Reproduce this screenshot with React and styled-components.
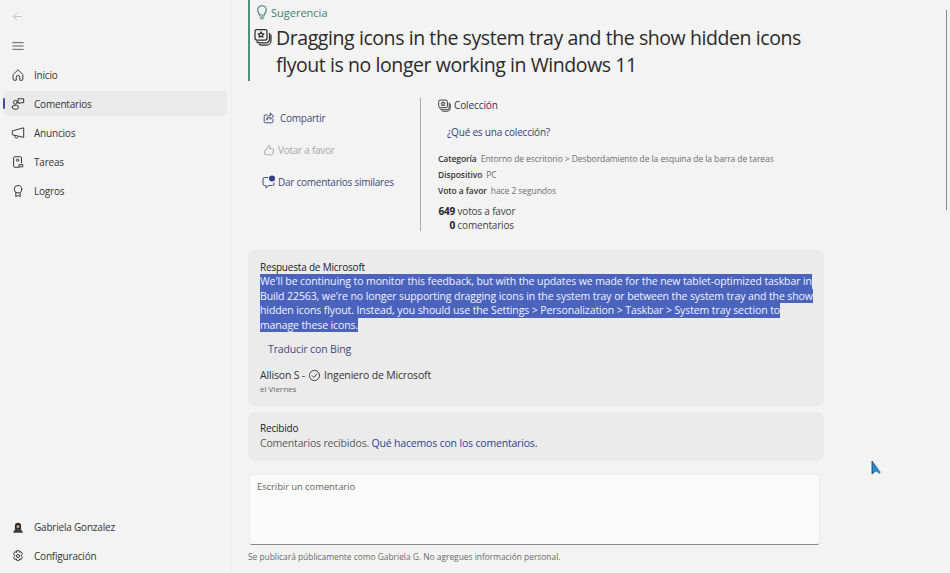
import React from "react";
import styled, { createGlobalStyle } from "styled-components";

const Global = createGlobalStyle`
  html, body { margin: 0; padding: 0; height: 100%; overflow: hidden; background: #f3f3f3; }
  body { font-family: "Open Sans", "Noto Sans", sans-serif; color: #2b2b2b; }
  * { box-sizing: border-box; }
`;

const Page = styled.div`
  position: relative;
  display: flex;
  width: 950px;
  height: 573px;
  overflow: hidden;
`;

const Sidebar = styled.aside`
  width: 232px;
  height: 100%;
  flex: none;
  display: flex;
  flex-direction: column;
  justify-content: space-between;
  padding: 0 4px 3px 4px;
  border-right: 1px solid #eeeeee;
`;

const NavTop = styled.nav`
  display: flex;
  flex-direction: column;
  padding-top: 2px;
`;

const NavBottom = styled.nav`
  display: flex;
  flex-direction: column;
`;

const IconSlot = styled.div`
  height: 29px;
  display: flex;
  align-items: center;
  padding-left: 8px;
  color: ${(p) => (p.$faded ? "#b9b9b9" : "#444")};
`;

const NavItem = styled.div`
  position: relative;
  height: 25px;
  margin: 2px 0;
  display: flex;
  align-items: center;
  gap: 9px;
  padding-left: 7px;
  border-radius: 4px;
  font-size: 10px;
  letter-spacing: -0.2px;
  color: #333;
  background: ${(p) => (p.$active ? "#eaeaea" : "transparent")};
  &::before {
    content: "";
    display: ${(p) => (p.$active ? "block" : "none")};
    position: absolute;
    left: -1px;
    top: 7px;
    width: 2px;
    height: 11px;
    border-radius: 1px;
    background: #3f4fa8;
  }
`;

const Main = styled.main`
  flex: 1;
  min-width: 0;
  padding: 0 126px 0 16px;
`;

const Header = styled.header`
  height: 81px;
  border-left: 2px solid #4f8f7c;
  padding-left: 4px;
`;

const Kind = styled.div`
  height: 24px;
  display: flex;
  align-items: center;
  gap: 1px;
  font-size: 11px;
  color: #3c7f74;
`;

const TitleRow = styled.div`
  display: flex;
  align-items: flex-start;
  gap: 4px;
  svg { margin-top: 4px; flex: none; }
`;

const Title = styled.h1`
  margin: 0;
  font-size: 19.5px;
  line-height: 27px;
  font-weight: 400;
  letter-spacing: -0.42px;
  color: #2a2a2a;
  white-space: nowrap;
`;

const Info = styled.section`
  display: flex;
  margin-top: 17px;
  height: 152px;
`;

const Actions = styled.div`
  width: 173px;
  flex: none;
  border-right: 1px solid #a8a8a8;
  height: 133px;
  padding: 12px 0 0 14px;
  display: flex;
  flex-direction: column;
  gap: 16px;
`;

const ActionLink = styled.div`
  height: 16px;
  display: flex;
  align-items: center;
  gap: ${(p) => p.$gap}px;
  font-size: 10px;
  letter-spacing: -0.25px;
  white-space: nowrap;
  color: ${(p) => (p.$disabled ? "#a9a9a9" : "#3d4a7c")};
`;

const Details = styled.div`
  padding-left: 17px;
  display: flex;
  flex-direction: column;
`;

const CollectionHead = styled.div`
  height: 14px;
  display: flex;
  align-items: center;
  gap: 3px;
  font-size: 10px;
  letter-spacing: -0.1px;
  color: #333;
`;

const WhatLink = styled.div`
  margin: 13px 0 11px 9px;
  font-size: 10px;
  letter-spacing: -0.2px;
  line-height: 14px;
  color: #35427a;
`;

const Meta = styled.div`
  display: flex;
  gap: 4px;
  height: 16px;
  align-items: center;
  font-size: 8.5px;
  letter-spacing: -0.08px;
  white-space: nowrap;
  color: #6d6d6d;
  b { font-weight: 600; color: #333; }
`;

const Counts = styled.div`
  margin-top: 6px;
  display: grid;
  grid-template-columns: 18px auto;
  column-gap: 2.5px;
  margin-left: -1px;
  font-size: 10px;
  letter-spacing: -0.18px;
  line-height: 14px;
  color: #444;
  width: max-content;
  b { font-weight: 700; text-align: right; color: #222; }
`;

const Card = styled.section`
  background: #ebebeb;
  border-radius: 7px;
  padding: ${(p) => p.$pad};
  margin-bottom: 6px;
`;

const CardLabel = styled.div`
  font-size: 10px;
  letter-spacing: -0.2px;
  line-height: 14px;
  color: #222;
`;

const Selected = styled.div`
  width: fit-content;
  height: 14.5px;
  line-height: 14.5px;
  font-size: 10.5px;
  letter-spacing: -0.1px;
  white-space: nowrap;
  color: #f2f4ff;
  background: #4a63bd;
`;

const Translate = styled.div`
  margin: 10px 0 0 8px;
  font-size: 10.5px;
  letter-spacing: -0.15px;
  line-height: 14px;
  color: #3d4a7c;
`;

const Author = styled.div`
  margin-top: 12px;
  display: flex;
  align-items: center;
  gap: 3px;
  font-size: 10.5px;
  letter-spacing: -0.17px;
  line-height: 14px;
  color: #333;
`;

const Stamp = styled.div`
  margin-top: 1px;
  font-size: 8px;
  line-height: 11px;
  color: #666;
`;

const Received = styled.div`
  font-size: 10.5px;
  letter-spacing: -0.18px;
  line-height: 16px;
  color: #5a5a5a;
`;

const ReceivedLink = styled.span`
  color: #2f4290;
`;

const CommentBox = styled.div`
  margin: 13px 4px 0 1px;
  height: 71px;
  background: #fbfbfb;
  border: 1px solid #ececec;
  border-bottom: 1px solid #8a8a8a;
  border-radius: 3px;
  padding: 5px 7px;
  font-size: 9.5px;
  letter-spacing: -0.1px;
  line-height: 13px;
  color: #666;
`;

const Caption = styled.div`
  margin-top: 6px;
  font-size: 8.4px;
  line-height: 12px;
  color: #6a6a6a;
`;

const ScrollThumb = styled.div`
  position: absolute;
  right: 3px;
  top: 10px;
  width: 1.5px;
  height: 200px;
  background: #8b8b8b;
`;

const Pointer = styled.svg`
  position: absolute;
  left: 871px;
  top: 460px;
`;

const Stroke = ({ size = 14, children }) => (
  <svg width={size} height={size} viewBox="0 0 16 16" fill="none" stroke="currentColor" strokeWidth="1.1" strokeLinecap="round" strokeLinejoin="round">
    {children}
  </svg>
);

const HomeIcon = () => (
  <Stroke>
    <path d="M2.5 7.5 8 2l5.5 5.5V13a1 1 0 0 1-1 1H10v-3.5a2 2 0 0 0-4 0V14H3.5a1 1 0 0 1-1-1Z" />
  </Stroke>
);
const FeedbackIcon = () => (
  <Stroke>
    <circle cx="5" cy="6" r="2.2" />
    <path d="M1.5 11.5a2 2 0 0 1 2-2h3a2 2 0 0 1 2 2A2.5 2.5 0 0 1 6 14H4a2.5 2.5 0 0 1-2.5-2.5Z" />
    <path d="M8.5 2H14.5v4.5H11L9.500 8V6.500h-1Z" />
  </Stroke>
);
const MegaphoneIcon = () => (
  <Stroke>
    <path d="M14.5 2.5V13L1.5 10V6Z" />
    <path d="M4.5 11v1.2a1.8 1.8 0 0 0 3.5.5" />
  </Stroke>
);
const TasksIcon = () => (
  <Stroke>
    <path d="M9 14H4a1 1 0 0 1-1-1V3a1 1 0 0 1 1-1h7a1 1 0 0 1 1 1v6" />
    <circle cx="7.5" cy="6" r="1.3" />
    <path d="M9.5 11h4v2.5h-4z" />
  </Stroke>
);
const AwardIcon = () => (
  <Stroke>
    <circle cx="8" cy="6" r="4.3" />
    <path d="M5.5 10v4.5L8 13l2.5 1.5V10" />
  </Stroke>
);
const GearIcon = () => (
  <Stroke>
    <path d="M6.6 2h2.800l.5 1.800 1.700-.7 1.500 2.400-1.300 1.300.1 1.400 1.300 1.200-1.500 2.500-1.700-.6-.6 1.700H6.600l-.5-1.700-1.700.6-1.500-2.500 1.300-1.200V7.200L2.900 5.500l1.500-2.400 1.700.7Z" />
    <circle cx="8" cy="8" r="1.8" />
  </Stroke>
);
const AvatarIcon = () => (
  <svg width="14" height="14" viewBox="0 0 16 16">
    <path d="M4.5 11V6.5a3.5 3.5 0 0 1 7 0V11Z" fill="#2a2a2a" />
    <path d="M2.5 14.5c.3-2.8 2.500-4.200 5.500-4.200s5.200 1.400 5.500 4.200Z" fill="#3a3a3a" />
    <circle cx="8" cy="7.5" r="1.8" fill="#b59a84" />
  </svg>
);
const BulbIcon = () => (
  <Stroke size={16}>
    <path d="M5.6 11c0-1.500-1.900-2.500-1.900-5a4.300 4.300 0 0 1 8.600 0c0 2.500-1.900 3.500-1.900 5Z" />
    <path d="M6 13h4M6.800 14.800h2.400" />
  </Stroke>
);
const CollectionIcon = ({ size = 18 }) => (
  <svg width={size} height={size} viewBox="0 0 18 18" fill="none" stroke="#2f2f2f" strokeWidth="1.25" strokeLinejoin="round">
    <rect x="1" y="1.5" width="12" height="10.5" rx="2" />
    <path d="M7 3.800l.9 1.900 2 .2-1.500 1.300.5 2L7 8.200l-1.900 1 .5-2L4.100 5.900l2-.2Z" />
    <path d="M2.500 13.500c.8 1 1.700 1.300 3 1.300H12a3.500 3.500 0 0 0 3.500-3.500V5" />
    <path d="M5 16.400c.8.400 1.500.6 2.500.6h5a4.500 4.500 0 0 0 4.500-4.500V6.500" />
  </svg>
);
const ShareIcon = () => (
  <Stroke>
    <path d="M12.5 9.500V12a1.500 1.500 0 0 1-1.500 1.500H4A1.500 1.500 0 0 1 2.500 12V6A1.500 1.500 0 0 1 4 4.500h2" />
    <path d="M9.5 2.500l4 3.500-4 3.500V7.500C7.500 7.500 6.200 8.500 5.500 10.500c0-3.500 1.500-5.500 4-5.500Z" />
  </Stroke>
);
const ThumbIcon = () => (
  <Stroke>
    <path d="M5 7.500 7.500 2.500c1.300 0 1.800 1 1.500 2.200L8.700 6.500H12a1.200 1.200 0 0 1 1.200 1.500l-1 4.500a1.500 1.500 0 0 1-1.500 1H6.500C5 13.500 4 13 3 13V9c1 0 1.500-.5 2-1.500Z" />
  </Stroke>
);
const SimilarIcon = () => (
  <svg width="14" height="14" viewBox="0 0 14 14" fill="none" stroke="#3d4a7c" strokeWidth="1">
    <path d="M6 2.500H2.500A1.500 1.500 0 0 0 1 4v5a1.500 1.500 0 0 0 1.500 1.500H4V13l2.800-2.500h3.700A1.500 1.500 0 0 0 12 9V7.500" strokeLinejoin="round" />
    <circle cx="10" cy="3.500" r="3" fill="#2f3f82" stroke="none" />
  </svg>
);
const VerifiedIcon = () => (
  <Stroke size={13}>
    <circle cx="8" cy="8" r="6.3" />
    <path d="M5 8.200l2.200 2.200L11 6" />
  </Stroke>
);

const navItems = [
  ["Inicio", HomeIcon],
  ["Comentarios", FeedbackIcon, true],
  ["Anuncios", MegaphoneIcon],
  ["Tareas", TasksIcon],
  ["Logros", AwardIcon],
];

const responseLines = [
  "We'll be continuing to monitor this feedback, but with the updates we made for the new tablet-optimized taskbar in",
  "Build 22563, we're no longer supporting dragging icons in the system tray or between the system tray and the show",
  "hidden icons flyout. Instead, you should use the Settings > Personalization > Taskbar > System tray section to",
  "manage these icons.",
];

export default function App() {
  return (
    <Page>
      <Global />
      <Sidebar>
        <NavTop>
          <IconSlot $faded>
            <Stroke size={11}>
              <path d="M14 8H2M7 3 2 8l5 5" />
            </Stroke>
          </IconSlot>
          <IconSlot>
            <Stroke size={12}>
              <path d="M1 3.500h14M1 8h14M1 12.500h14" />
            </Stroke>
          </IconSlot>
          {navItems.map(([label, Icon, active]) => (
            <NavItem key={label} $active={active}>
              <Icon />
              {label}
            </NavItem>
          ))}
        </NavTop>
        <NavBottom>
          <NavItem>
            <AvatarIcon />
            Gabriela Gonzalez
          </NavItem>
          <NavItem>
            <GearIcon />
            Configuración
          </NavItem>
        </NavBottom>
      </Sidebar>
      <Main>
        <Header>
          <Kind>
            <BulbIcon />
            Sugerencia
          </Kind>
          <TitleRow>
            <CollectionIcon />
            <Title>
              Dragging icons in the system tray and the show hidden icons
              <br />
              flyout is no longer working in Windows 11
            </Title>
          </TitleRow>
        </Header>
        <Info>
          <Actions>
            <ActionLink $gap={4}>
              <ShareIcon />
              Compartir
            </ActionLink>
            <ActionLink $gap={2} $disabled>
              <ThumbIcon />
              Votar a favor
            </ActionLink>
            <ActionLink $gap={2}>
              <SimilarIcon />
              Dar comentarios similares
            </ActionLink>
          </Actions>
          <Details>
            <CollectionHead>
              <CollectionIcon size={13} />
              Colección
            </CollectionHead>
            <WhatLink>¿Qué es una colección?</WhatLink>
            <Meta>
              <b>Categoría</b> Entorno de escritorio &gt; Desbordamiento de la esquina de la barra de tareas
            </Meta>
            <Meta>
              <b>Dispositivo</b> PC
            </Meta>
            <Meta>
              <b>Voto a favor</b> hace 2 segundos
            </Meta>
            <Counts>
              <b>649</b>
              <span>votos a favor</span>
              <b>0</b>
              <span>comentarios</span>
            </Counts>
          </Details>
        </Info>
        <Card $pad="10px 12px 12px">
          <CardLabel>Respuesta de Microsoft</CardLabel>
          {responseLines.map((line) => (
            <Selected key={line}>{line}</Selected>
          ))}
          <Translate>Traducir con Bing</Translate>
          <Author>
            Allison S - <VerifiedIcon /> Ingeniero de Microsoft
          </Author>
          <Stamp>el Viernes</Stamp>
        </Card>
        <Card $pad="9px 12px 10px">
          <CardLabel>Recibido</CardLabel>
          <Received>
            Comentarios recibidos. <ReceivedLink>Qué hacemos con los comentarios.</ReceivedLink>
          </Received>
        </Card>
        <CommentBox>Escribir un comentario</CommentBox>
        <Caption>Se publicará públicamente como Gabriela G. No agregues información personal.</Caption>
      </Main>
      <ScrollThumb />
      <Pointer width="12" height="16" viewBox="0 0 12 16">
        <path d="M1 1v13l3.5-3 4 .5Z" fill="#2a8fd0" stroke="#1d3a55" strokeWidth="0.8" />
        <path d="M4.5 9 9 13" stroke="#2a8fd0" strokeWidth="2.5" />
      </Pointer>
    </Page>
  );
}
